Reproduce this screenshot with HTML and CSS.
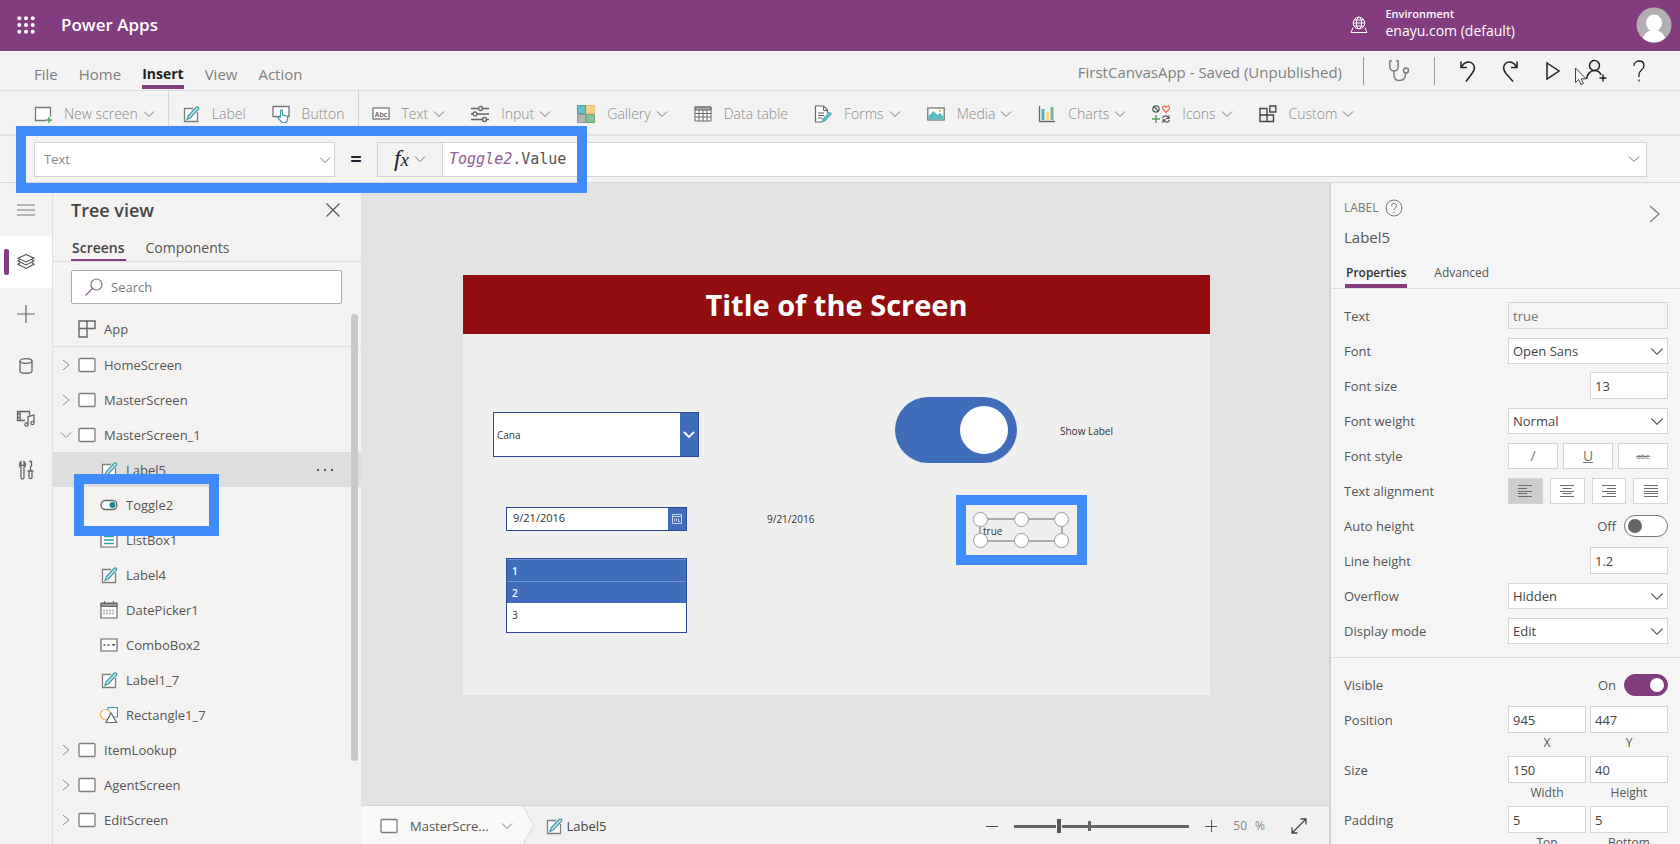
FILE: index.html
```html
<!DOCTYPE html>
<html lang="en">
<head>
    <meta charset="UTF-8">
    <meta name="viewport" content="width=device-width, initial-scale=1.0">
    <title>FirstCanvasApp - Power Apps</title>
    <link rel="stylesheet" href="styles.css">
</head>
<body>
    <!-- shared icons -->
    <svg class="sprite" aria-hidden="true">
        <symbol id="i-down" viewBox="0 0 12 8"><path d="M1 1.500l5 5 5-5" fill="none" stroke="currentColor"/></symbol>
        <symbol id="i-right" viewBox="0 0 8 12"><path d="M1 1l6 5-6 5" fill="none" stroke="currentColor"/></symbol>
        <symbol id="i-screen" viewBox="0 0 18 18"><rect x="1" y="2.500" width="16" height="13" rx="1" fill="#fff" stroke="#7d7d7d" stroke-width="1.300"/></symbol>
        <symbol id="i-label" viewBox="0 0 18 18">
            <path d="M15.500 7v9.500h-13v-13H11" fill="#fff" stroke="#7d7d7d" stroke-width="1.300"/>
            <path d="M5 14.500l1-3.500 8.200-8.700c1.500-1.300 3.400.5 2.100 2.100L8.200 13z" fill="#bfe3e6" stroke="#3d9ca5" stroke-width="1.200"/>
        </symbol>
        <symbol id="i-left" viewBox="0 0 14 12"><path d="M0 .5h14M0 3.500h9M0 6.500h14M0 8.500h9M0 11.500h14" stroke="#6c6c6c" fill="none"/></symbol>
    </svg>

    <header class="topbar">
        <button class="waffle" aria-label="App launcher">
            <svg width="18" height="18" viewBox="0 0 18 18" fill="#fff"><circle cx="2.300" cy="2.300" r="2"/><circle cx="9" cy="2.300" r="2"/><circle cx="15.700" cy="2.300" r="2"/><circle cx="2.300" cy="9" r="2"/><circle cx="9" cy="9" r="2"/><circle cx="15.700" cy="9" r="2"/><circle cx="2.300" cy="15.700" r="2"/><circle cx="9" cy="15.700" r="2"/><circle cx="15.700" cy="15.700" r="2"/></svg>
        </button>
        <a href="#" class="brand">Power Apps</a>
        <button class="environment">
            <svg width="18" height="18" viewBox="0 0 18 18" fill="none" stroke="#fff"><circle cx="9" cy="7" r="5.800"/><ellipse cx="9" cy="7" rx="2.600" ry="5.800"/><path d="M3.200 7h11.600M4 4h10M4 10h10M3 11.500L1 16.500h16l-2-5" /></svg>
            <span class="env-text"><small>Environment</small><span>enayu.com (default)</span></span>
        </button>
        <button class="avatar" aria-label="Account">
            <svg width="36" height="36" viewBox="0 0 36 36"><defs><clipPath id="round"><circle cx="18" cy="18" r="17.500"/></clipPath></defs><g clip-path="url(#round)"><rect width="36" height="36" fill="#b1afb0"/><ellipse cx="18" cy="16" rx="8" ry="8.500" fill="#fff"/><path d="M6 37c0-9 5-14 12-14s12 5 12 14z" fill="#fff"/></g></svg>
        </button>
    </header>

    <nav class="menubar">
        <a href="#">File</a>
        <a href="#">Home</a>
        <a href="#" class="active">Insert</a>
        <a href="#">View</a>
        <a href="#">Action</a>
        <span class="app-status">FirstCanvasApp - Saved (Unpublished)</span>
        <div class="app-tools">
            <button class="checker" aria-label="App checker"><svg width="22" height="24" viewBox="0 0 22 24" fill="none" stroke="#777" stroke-width="1.400"><path d="M4 2H1.800v5c0 3 1.700 5 4.200 5s4.200-2 4.200-5V2H8M6 12v3.500c0 4 2 6 5 6s6.500-1.500 6.500-6V14"/><circle cx="18" cy="11.500" r="2.500"/></svg></button>
            <button aria-label="Undo"><svg width="18" height="24" viewBox="0 0 18 24" fill="none" stroke="#222" stroke-width="1.500"><path d="M2 2.500v6h6M2.500 8C5 3 10 1.500 13.500 4.500c3 3 2.200 6.500-.5 10L7 22.500"/></svg></button>
            <button aria-label="Redo"><svg width="18" height="24" viewBox="0 0 18 24" fill="none" stroke="#222" stroke-width="1.500"><path d="M16 2.500v6h-6M15.500 8C13 3 8 1.500 4.500 4.500c-3 3-2.200 6.500.5 10l7 8"/></svg></button>
            <button aria-label="Preview the app"><svg width="18" height="24" viewBox="0 0 18 24" fill="none" stroke="#222" stroke-width="1.500"><path d="M4 4l12 8-12 8z"/></svg></button>
            <button aria-label="Share"><svg width="22" height="24" viewBox="0 0 22 24" fill="none" stroke="#222" stroke-width="1.500"><circle cx="9.500" cy="6.500" r="5"/><path d="M1.500 20c.5-5 4-8.500 8-8.500 3 0 5.500 1.800 6.500 4.500M18 15.500v7M14.500 19h7"/></svg></button>
            <button aria-label="Help"><svg width="16" height="24" viewBox="0 0 16 24" fill="none" stroke="#222" stroke-width="1.300"><path d="M3 7c0-3 2-5 5-5s5 2 5 4.800C13 11 8 11 8 15.500V18M8 20.500v2"/></svg></button>
            <svg class="cursor" width="14" height="20" viewBox="0 0 14 20"><path d="M1.500 1v14.500l3.300-3 2 5 2.500-1-2-4.700H12z" fill="#fff" stroke="#444"/></svg>
        </div>
    </nav>

    <div class="ribbon">
        <button class="tool"><svg width="18" height="18" viewBox="0 0 18 18"><path d="M12 15.500H1.500v-13h15v9" fill="#fff" stroke="#777" stroke-width="1.300"/><path d="M15 12v6M12 15h6" stroke="#4fa35a" stroke-width="1.400"/></svg><span>New screen</span><svg class="chev"><use href="#i-down"/></svg></button>
        <hr>
        <button class="tool"><svg width="18" height="18"><use href="#i-label"/></svg><span>Label</span></button>
        <button class="tool"><svg width="18" height="18" viewBox="0 0 18 18"><path d="M1 1.500h16v10H1z" fill="#fff" stroke="#777" stroke-width="1.300"/><path d="M8.500 12V6c0-1.400 2-1.400 2 0v4l4 1c1 .3 1.300 1 1.200 2l-.7 3c-.3 1-1 1.500-2 1.500h-2c-1 0-1.500-.5-2-1.200L5.700 12.500c.8-1.300 2-.8 2.800.3" fill="#fff" stroke="#3d9ca5" stroke-width="1.200"/></svg><span>Button</span></button>
        <hr>
        <button class="tool"><svg width="18" height="18" viewBox="0 0 18 18"><rect x="1" y="3" width="16" height="11" fill="#fff" stroke="#777" stroke-width="1.300"/><text x="9" y="11.500" text-anchor="middle" class="abc">Abc</text></svg><span>Text</span><svg class="chev"><use href="#i-down"/></svg></button>
        <button class="tool"><svg width="18" height="18" viewBox="0 0 18 18" fill="#f3f3f3" stroke="#666" stroke-width="1.300"><path d="M0 3.500h18M0 9h18M0 14.500h18"/><circle cx="9.500" cy="3.500" r="2"/><circle cx="4" cy="9" r="2"/><circle cx="13.500" cy="14.500" r="2"/></svg><span>Input</span><svg class="chev"><use href="#i-down"/></svg></button>
        <button class="tool"><svg width="18" height="18" viewBox="0 0 18 18"><rect x=".5" y=".5" width="8" height="8" fill="#63c1ca" stroke="#4ea3ab"/><rect x="9.500" y=".5" width="8" height="8" fill="#fbcf8c" stroke="#efc27d"/><rect x=".5" y="9.500" width="8" height="8" fill="#b4b4b4" stroke="#999"/><rect x="9.500" y="9.500" width="8" height="8" fill="#8cc095" stroke="#69a874"/></svg><span>Gallery</span><svg class="chev"><use href="#i-down"/></svg></button>
        <button class="tool"><svg width="18" height="18" viewBox="0 0 18 18"><path d="M1 2h16v14H1z" fill="#fff" stroke="#666"/><path d="M1 2h16v3H1z" fill="#aaa" stroke="#666"/><path d="M1 8.500h16M1 12h16M5 5v11M9 5v11M13 5v11" stroke="#666"/></svg><span>Data table</span></button>
        <button class="tool"><svg width="18" height="18" viewBox="0 0 18 18"><path d="M8 17H1.500V1h8l4 4v3" fill="#fff" stroke="#666" stroke-width="1.200"/><path d="M9.500 1v4.500h4M4 8h6M4 10.500h6M4 13h4" fill="none" stroke="#666"/><path d="M8 17l1-3.500L15.500 7l2 2-6.500 7z" fill="#63bcc5" stroke="#3d9ca5" stroke-width=".8"/></svg><span>Forms</span><svg class="chev"><use href="#i-down"/></svg></button>
        <button class="tool"><svg width="18" height="18" viewBox="0 0 18 18"><rect x=".8" y="3" width="16.400" height="12" fill="#fff" stroke="#777" stroke-width="1.300"/><path d="M1.500 14.500V11l5-5 4 4 2.500-2 3.500 3.500v3z" fill="#59bcc5"/><circle cx="13" cy="5.800" r="1" fill="#e9a13b"/></svg><span>Media</span><svg class="chev"><use href="#i-down"/></svg></button>
        <button class="tool"><svg width="18" height="18" viewBox="0 0 18 18"><path d="M1.500 1v15.500H17" fill="none" stroke="#666" stroke-width="1.300"/><path d="M3.500 4h3v11h-3z" fill="#4fb0ba"/><path d="M8 7h3v8H8z" fill="#fbcf8c"/><path d="M12.500 2h3v13h-3z" fill="#78b683"/></svg><span>Charts</span><svg class="chev"><use href="#i-down"/></svg></button>
        <button class="tool"><svg width="18" height="18" viewBox="0 0 18 18" fill="none" stroke="#555" stroke-width="1.200"><circle cx="4" cy="4" r="3.200"/><path d="M2 1.500l4.500 4.800"/><path d="M14 7.500L10.800 4c-1.300-3 2-3.700 3.200-1.500C15.200.3 18.500 1 17.200 4z" stroke="#e8704a"/><path d="M4 10v8M0 14h8" stroke="#4fa35a" stroke-width="1.400"/><path d="M10.500 13c.7-2.500 4.500-3 6 0M17 10.500V13.500h-3M17.500 15c-.7 2.500-4.500 3-6 0M11 18v-3.200h3"/></svg><span>Icons</span><svg class="chev"><use href="#i-down"/></svg></button>
        <button class="tool"><svg width="18" height="18" viewBox="0 0 18 18" fill="none" stroke="#444" stroke-width="1.400"><path d="M1 3.500h7v6.500H1zM1 10h7v6.500H1zM8 10h6.500v6.500H8zM10.800 1h6v6h-6z"/></svg><span>Custom</span><svg class="chev"><use href="#i-down"/></svg></button>
    </div>

    <div class="formula-bar">
        <div class="select-wrap property">
            <select aria-label="Property"><option>Text</option></select>
            <svg class="chev"><use href="#i-down"/></svg>
        </div>
        <span class="equals">=</span>
        <button class="fx" aria-label="Insert function"><i>f<small>x</small></i><svg class="chev"><use href="#i-down"/></svg></button>
        <div class="formula" role="textbox" aria-label="Formula" contenteditable="true"><em>Toggle2</em>.Value</div>
        <button class="expand" aria-label="Expand formula bar"><svg class="chev"><use href="#i-down"/></svg></button>
        <div class="highlight highlight-formula"></div>
    </div>

    <main class="workspace">
        <nav class="rail">
            <button aria-label="Menu"><svg width="18" height="18" viewBox="0 0 18 18" stroke="#777" stroke-width="1.200"><path d="M0 4h18M0 9h18M0 14h18"/></svg></button>
            <button class="active" aria-label="Tree view"><svg width="18" height="18" viewBox="0 0 18 18" fill="none" stroke="#555" stroke-width="1.100"><path d="M9 1.500l8 3.700L9 9 1 5.200zM3 6.500L1 8l8 4 8-4-2-1.500M3 9.800l-2 1.500 8 4.200 8-4.200-2-1.500"/></svg></button>
            <button aria-label="Insert"><svg width="18" height="18" viewBox="0 0 18 18" stroke="#666" stroke-width="1.200"><path d="M9 0v18M0 9h18"/></svg></button>
            <button aria-label="Data"><svg width="18" height="18" viewBox="0 0 18 18" fill="none" stroke="#666" stroke-width="1.300"><ellipse cx="9" cy="4" rx="6" ry="2.300"/><path d="M3 4v10c0 3 12 3 12 0V4"/></svg></button>
            <button aria-label="Media"><svg width="20" height="18" viewBox="0 0 20 18" fill="none" stroke="#666" stroke-width="1.300"><path d="M9 11.500H1.500v-9h12V6M4 2.500v9M1.500 5H4M1.500 8.500H4M12 15.500V7.500l6-1.500v7"/><circle cx="10.500" cy="15.500" r="1.600"/><circle cx="16.500" cy="14" r="1.600"/></svg></button>
            <button aria-label="Advanced tools"><svg width="18" height="20" viewBox="0 0 18 20" fill="none" stroke="#666" stroke-width="1.300"><path d="M4 1.500v4h3v-4c2 1.500 2 5 0 6v10c0 2-3 2-3 0v-10c-2-1-2-4.500 0-6zM12 1.500h2.500v4L13.500 7v4M10.500 11h6M12 11v6.500c0 1.500 3 1.500 3 0V11"/></svg></button>
        </nav>

        <aside class="tree">
            <div class="tree-head">
                <h2>Tree view</h2>
                <button aria-label="Close"><svg width="14" height="14" viewBox="0 0 14 14" stroke="#555" stroke-width="1.200"><path d="M.5.5l13 13M13.500.5l-13 13"/></svg></button>
            </div>
            <div class="tree-tabs">
                <button class="active">Screens</button>
                <button>Components</button>
            </div>
            <label class="search">
                <svg width="18" height="18" viewBox="0 0 18 18" fill="none" stroke="#8f6390" stroke-width="1.200"><circle cx="11.500" cy="6.500" r="5.500"/><path d="M7.500 10.500l-7 7"/></svg>
                <input type="text" placeholder="Search" aria-label="Search">
            </label>
            <div class="tree-body">
                <div class="app-row"><svg width="18" height="18" viewBox="0 0 18 18" fill="none" stroke="#666" stroke-width="1.400"><path d="M1 1h16v7.500H1zM1 8.500h8V17H1zM9 1v7.500"/></svg>App</div>
                <ul>
                    <li><svg class="arrow"><use href="#i-right"/></svg><svg class="icon"><use href="#i-screen"/></svg>HomeScreen</li>
                    <li><svg class="arrow"><use href="#i-right"/></svg><svg class="icon"><use href="#i-screen"/></svg>MasterScreen</li>
                    <li><svg class="arrow"><use href="#i-down"/></svg><svg class="icon"><use href="#i-screen"/></svg>MasterScreen_1</li>
                    <li class="child selected"><svg class="icon"><use href="#i-label"/></svg>Label5<button aria-label="More"><svg width="18" height="4" viewBox="0 0 18 4" fill="#555"><circle cx="2" cy="2" r="1.200"/><circle cx="9" cy="2" r="1.200"/><circle cx="16" cy="2" r="1.200"/></svg></button></li>
                    <li class="child"><svg class="icon" viewBox="0 0 18 18"><rect x="1" y="4.500" width="16" height="9" rx="4.500" fill="#fff" stroke="#666" stroke-width="1.300"/><circle cx="12.500" cy="9" r="3" fill="#16868e"/></svg>Toggle2<div class="highlight highlight-node"></div></li>
                    <li class="child"><svg class="icon" viewBox="0 0 18 18"><path d="M1 2h16v14H1z" fill="#fff" stroke="#666" stroke-width="1.200"/><path d="M4 5.500h10M4 9h10M4 12.500h10" stroke="#3d9ca5" stroke-width="1.300"/></svg>ListBox1</li>
                    <li class="child"><svg class="icon"><use href="#i-label"/></svg>Label4</li>
                    <li class="child"><svg class="icon" viewBox="0 0 18 18"><path d="M1 2h16v15H1z" fill="#fff" stroke="#666" stroke-width="1.200"/><path d="M1 2.500h16v3H1z" fill="#999" stroke="#666"/><path d="M4.500 0v3M13.500 0v3" stroke="#666"/><path d="M4 8.500v6M7 8.500v6M10 8.500v6M13 8.500v6" stroke="#777" stroke-dasharray="2 1"/></svg>DatePicker1</li>
                    <li class="child"><svg class="icon" viewBox="0 0 18 18"><path d="M1 3h16v12H1z" fill="#fff" stroke="#666" stroke-width="1.200"/><path d="M3.500 9h2M7.500 9h2" stroke="#555" stroke-width="1.400"/><path d="M11.500 8h4L13.500 10.500z" fill="#555"/></svg>ComboBox2</li>
                    <li class="child"><svg class="icon"><use href="#i-label"/></svg>Label1_7</li>
                    <li class="child"><svg class="icon" viewBox="0 0 18 18"><path d="M8 1.500h9.500V11H8z" fill="#fff" stroke="#3d9ca5" stroke-width="1.200"/><circle cx="5.500" cy="8.500" r="5" fill="#fff" stroke="#f0b566" stroke-width="1.200"/><path d="M11 7l5.500 9.500H6z" fill="#fff" stroke="#666" stroke-width="1.200"/></svg>Rectangle1_7</li>
                    <li><svg class="arrow"><use href="#i-right"/></svg><svg class="icon"><use href="#i-screen"/></svg>ItemLookup</li>
                    <li><svg class="arrow"><use href="#i-right"/></svg><svg class="icon"><use href="#i-screen"/></svg>AgentScreen</li>
                    <li><svg class="arrow"><use href="#i-right"/></svg><svg class="icon"><use href="#i-screen"/></svg>EditScreen</li>
                </ul>
                <div class="scrollbar"></div>
            </div>
        </aside>

        <section class="stage">
            <div class="canvas">
                <div class="screen">
                    <h1>Title of the Screen</h1>
                    <div class="combo">
                        <input type="text" value="Cana" aria-label="Combo box">
                        <button aria-label="Open list"><svg width="12" height="8" viewBox="0 0 12 8" fill="none" stroke="#fff" stroke-width="1.800"><path d="M1 1l5 5 5-5"/></svg></button>
                    </div>
                    <div class="date">
                        <input type="text" value="9/21/2016" aria-label="Date">
                        <button aria-label="Open calendar"><svg width="10" height="10" viewBox="0 0 10 10" fill="none" stroke="#c5d4f0"><path d="M.5.5h9v9h-9zM.5 2.500h9M2.500 4.500v3M4.500 4.500v3M6.500 4.500v3h1.500"/></svg></button>
                    </div>
                    <span class="date-label">9/21/2016</span>
                    <select class="listbox" multiple size="3" aria-label="List box">
                        <option selected>1</option>
                        <option selected>2</option>
                        <option>3</option>
                    </select>
                    <input type="checkbox" class="big-toggle" id="toggle2" checked>
                    <label class="toggle-label" for="toggle2">Show Label</label>
                    <div class="selection">
                        true
                        <i class="h nw"></i><i class="h n"></i><i class="h ne"></i>
                        <i class="h sw"></i><i class="h s"></i><i class="h se"></i>
                        <div class="highlight highlight-label"></div>
                    </div>
                </div>
            </div>
            <footer class="statusbar">
                <button class="crumb"><svg class="icon"><use href="#i-screen"/></svg><span>MasterScre...</span><svg class="chev"><use href="#i-down"/></svg></button>
                <svg class="crumb-end" width="12" viewBox="0 0 12 39" preserveAspectRatio="none"><path d="M0 0l11 20L0 39z" fill="#f8f8f6"/><path d="M0 0l11 20L0 39" fill="none" stroke="#d8d8d8"/></svg>
                <button class="crumb-current"><svg class="icon"><use href="#i-label"/></svg>Label5</button>
                <div class="zoom">
                    <button aria-label="Zoom out"><svg width="12" height="12" stroke="#555"><path d="M0 6.500h12"/></svg></button>
                    <input type="range" min="0" max="100" value="25" aria-label="Zoom">
                    <button aria-label="Zoom in"><svg width="12" height="12" stroke="#555"><path d="M0 6.500h12M6.500 0v12"/></svg></button>
                    <span class="percent"><span>50</span><span>%</span></span>
                    <button aria-label="Fit to window"><svg width="16" height="16" viewBox="0 0 16 16" fill="none" stroke="#444" stroke-width="1.300"><path d="M1 15L15 1M9.500 1H15v5.500M1 9.500V15h5.500"/></svg></button>
                </div>
            </footer>
        </section>

        <aside class="props">
            <div class="props-head">
                <div>
                    <div class="kind">LABEL <svg width="18" height="18" viewBox="0 0 18 18" fill="none" stroke="#777"><circle cx="9" cy="9" r="8"/><path d="M6.500 7c0-3.500 5-3.300 5-.3C11.500 9 9 8.800 9 11M9 12.500V14"/></svg></div>
                    <div class="name">Label5</div>
                </div>
                <button aria-label="Collapse panel"><svg width="12" height="18" viewBox="0 0 12 18" fill="none" stroke="#777" stroke-width="1.200"><path d="M1 1l9 8-9 8"/></svg></button>
            </div>
            <div class="props-tabs">
                <button class="active">Properties</button>
                <button>Advanced</button>
            </div>
            <div class="props-group">
                <div class="row"><label for="p-text">Text</label><input id="p-text" class="wide" type="text" value="true" readonly></div>
                <div class="row"><label for="p-font">Font</label><div class="select-wrap"><select id="p-font"><option>Open Sans</option></select><svg class="chev"><use href="#i-down"/></svg></div></div>
                <div class="row"><label for="p-size">Font size</label><input id="p-size" type="text" value="13"></div>
                <div class="row"><label for="p-weight">Font weight</label><div class="select-wrap"><select id="p-weight"><option>Normal</option></select><svg class="chev"><use href="#i-down"/></svg></div></div>
                <div class="row"><span>Font style</span><div class="buttons style-buttons"><button aria-label="Italic">/</button><button aria-label="Underline"><u>U</u></button><button aria-label="Strikethrough"><s>abc</s></button></div></div>
                <div class="row"><span>Text alignment</span><div class="buttons align-buttons">
                    <button class="on" aria-label="Left"><svg width="14" height="12"><use href="#i-left"/></svg></button>
                    <button aria-label="Center"><svg width="14" height="12" stroke="#6c6c6c"><path d="M0 .5h14M2.500 3.500h9M0 6.500h14M2.500 8.500h9M0 11.500h14"/></svg></button>
                    <button aria-label="Right"><svg width="14" height="12" stroke="#6c6c6c"><path d="M0 .5h14M5 3.500h9M0 6.500h14M5 8.500h9M0 11.500h14"/></svg></button>
                    <button aria-label="Justify"><svg width="14" height="12" stroke="#6c6c6c"><path d="M0 .5h14M0 3.500h14M0 6.500h14M0 8.500h14M0 11.500h14"/></svg></button>
                </div></div>
                <div class="row"><label for="p-auto">Auto height</label><div class="switch"><span>Off</span><input id="p-auto" type="checkbox"></div></div>
                <div class="row"><label for="p-line">Line height</label><input id="p-line" type="text" value="1.2"></div>
                <div class="row"><label for="p-over">Overflow</label><div class="select-wrap"><select id="p-over"><option>Hidden</option></select><svg class="chev"><use href="#i-down"/></svg></div></div>
                <div class="row"><label for="p-mode">Display mode</label><div class="select-wrap"><select id="p-mode"><option>Edit</option></select><svg class="chev"><use href="#i-down"/></svg></div></div>
            </div>
            <div class="props-group">
                <div class="row"><label for="p-vis">Visible</label><div class="switch"><span>On</span><input id="p-vis" type="checkbox" checked></div></div>
                <div class="row pair"><span>Position</span><label><input type="text" value="945">X</label><label><input type="text" value="447">Y</label></div>
                <div class="row pair"><span>Size</span><label><input type="text" value="150">Width</label><label><input type="text" value="40">Height</label></div>
                <div class="row pair"><span>Padding</span><label><input type="text" value="5">Top</label><label><input type="text" value="5">Bottom</label></div>
            </div>
        </aside>
    </main>
</body>
</html>
```

FILE: styles.css
```css
* {
    box-sizing: border-box;
}

body {
    margin: 0;
    height: 100vh;
    display: flex;
    flex-direction: column;
    overflow: hidden;
    background: #f3f3f3;
    color: #555;
    font-family: "Open Sans", "Noto Sans", sans-serif;
    font-size: 13px;
    line-height: 18px;
}

button, input, select {
    font: inherit;
    color: inherit;
    margin: 0;
}

button {
    border: 0;
    padding: 0;
    background: none;
    cursor: pointer;
}

button svg {
    display: block;
}

a {
    color: inherit;
    text-decoration: none;
}

svg {
    flex: none;
}

.sprite {
    display: none;
}

.chev {
    width: 12px;
    height: 8px;
    color: #777;
}

.icon {
    width: 18px;
    height: 18px;
}

.highlight {
    position: absolute;
    z-index: 5;
    border: 10px solid #3f8cfa;
    pointer-events: none;
}

/* top bar */
.topbar {
    flex: none;
    height: 51px;
    display: flex;
    align-items: center;
    padding: 0 8px 2px 17px;
    background: #833c80;
    color: #fff;
}

.brand {
    margin-left: 26px;
    font-size: 17px;
    font-weight: 600;
}

.environment {
    display: flex;
    align-items: center;
    gap: 17px;
    margin-left: auto;
    text-align: left;
}

.env-text {
    display: flex;
    flex-direction: column;
    padding-bottom: 4px;
    font-size: 14px;
}

.env-text small {
    font-size: 11px;
    font-weight: 600;
    line-height: 16px;
}

.avatar {
    margin-left: 121px;
}

/* menu */
.menubar {
    flex: none;
    height: 40px;
    display: flex;
    align-items: center;
    gap: 21px;
    padding: 0 33px 0 34px;
    border-bottom: 1px solid #ddd;
    color: #808080;
    font-size: 15px;
}

.menubar a {
    padding: 5px 0 2px;
    border-bottom: 4px solid transparent;
    margin-top: 8px;
}

.menubar .active {
    border-color: #833c80;
    color: #222;
    font-size: 14px;
    font-weight: 700;
}

.app-status {
    margin-left: auto;
    padding-top: 3px;
}

.app-tools {
    position: relative;
    display: flex;
    align-items: center;
    gap: 24px;
}

.checker {
    padding: 2px 24px;
    border: solid #999;
    border-width: 0 1px;
}

.cursor {
    position: absolute;
    right: 59px;
    top: 10px;
}

/* ribbon */
.ribbon {
    flex: none;
    height: 45px;
    display: flex;
    align-items: center;
    gap: 26px;
    padding: 2px 34px 0;
    border-bottom: 2px solid #e4e4e4;
    color: #8a8a8a;
}

.ribbon hr {
    align-self: stretch;
    width: 1px;
    margin: -2px -13px 0;
    border: 0;
    background: #d4d4d4;
}

.tool {
    display: flex;
    align-items: center;
    gap: 5px;
    font-size: 14px;
    font-weight: 300;
}

.tool svg:first-child {
    margin-right: 7px;
}

.abc {
    font-size: 7px;
    font-weight: 600;
    fill: #555;
}

/* formula bar */
.formula-bar {
    flex: none;
    position: relative;
    height: 47px;
    display: flex;
    align-items: center;
    padding: 0 33px 0 34px;
    border-bottom: 1px solid #d8d8d8;
    font-size: 13px;
}

.select-wrap {
    position: relative;
    width: 160px;
}

.select-wrap select {
    appearance: none;
    width: 100%;
    height: 26px;
    padding: 0 4px;
    border: 1px solid #d4d4d4;
    border-radius: 0;
    background: #fff;
    color: #444;
}

.select-wrap .chev {
    position: absolute;
    right: 4px;
    top: 9px;
    pointer-events: none;
}

.select-wrap.property {
    width: 301px;
}

.property select {
    height: 35px;
    padding: 0 9px;
    color: #888;
}

.property .chev {
    top: 14px;
}

.equals {
    width: 42px;
    text-align: center;
    font-size: 20px;
    font-weight: 700;
    color: #222;
}

.fx {
    width: 66px;
    height: 35px;
    display: flex;
    align-items: center;
    justify-content: center;
    gap: 5px;
    border: 1px solid #d4d4d4;
    font-family: "Liberation Serif", serif;
    font-size: 24px;
    color: #222;
}

.fx small {
    font-size: 19px;
}

.formula {
    flex: 1;
    height: 35px;
    padding: 0 6px;
    border: solid #d4d4d4;
    border-width: 1px 0;
    background: #fff;
    font-family: "DejaVu Sans Mono", monospace;
    font-size: 15px;
    line-height: 32px;
}

.formula em {
    color: #8f5d90;
}

.expand {
    height: 35px;
    padding: 0 6px;
    border: solid #d4d4d4;
    border-width: 1px 1px 1px 0;
    background: #fff;
}

.highlight-formula {
    left: 16px;
    top: -10px;
    width: 571px;
    height: 67px;
}

/* workspace */
.workspace {
    flex: 1;
    min-height: 0;
    display: flex;
}

.rail {
    flex: none;
    width: 53px;
    display: flex;
    flex-direction: column;
    padding-top: 1px;
    border-right: 1px solid #e2e2e2;
    background: #f4f3f2;
}

.rail button {
    position: relative;
    height: 52px;
    display: flex;
    align-items: center;
    justify-content: center;
}

.rail .active {
    background: #fff;
}

.rail .active::before {
    content: "";
    position: absolute;
    left: 4px;
    top: 13px;
    width: 5px;
    height: 26px;
    border-radius: 2px;
    background: #833c80;
}

/* tree view */
.tree {
    flex: none;
    width: 308px;
    display: flex;
    flex-direction: column;
    background: #f4f3f2;
}

.tree-head {
    display: flex;
    align-items: center;
    justify-content: space-between;
    height: 53px;
    padding: 0 21px 0 18px;
}

.tree-head h2 {
    margin: 0;
    font-size: 18px;
    font-weight: 600;
    color: #444;
}

.tree-tabs {
    display: flex;
    gap: 19px;
    height: 26px;
    padding: 0 18px;
    border-bottom: 1px solid #ddd;
    font-size: 14px;
}

.tree-tabs button {
    padding: 0 1px;
    border-bottom: 2px solid transparent;
}

.tree-tabs .active {
    border-color: #833c80;
    color: #444;
    font-weight: 600;
}

.search {
    display: flex;
    align-items: center;
    gap: 8px;
    height: 34px;
    margin: 8px 19px 8px 18px;
    padding: 0 13px;
    border: 1px solid #aaa;
    border-radius: 2px;
    background: #fff;
}

.search input {
    flex: 1;
    min-width: 0;
    padding: 0;
    border: 0;
    outline: 0;
    background: none;
}

.search input::placeholder {
    color: #777;
}

.tree-body {
    position: relative;
    flex: 1;
    min-height: 0;
}

.app-row {
    display: flex;
    align-items: center;
    gap: 8px;
    height: 35px;
    padding-left: 25px;
    border-bottom: 1px solid #ddd;
}

.tree ul {
    list-style: none;
    margin: 0;
    padding: 0;
}

.tree li {
    position: relative;
    display: flex;
    align-items: center;
    gap: 8px;
    height: 35px;
    padding: 0 27px 0 7px;
}

.tree .arrow {
    width: 12px;
    height: 12px;
    margin-right: -2px;
    color: #888;
}

.tree .child {
    padding-left: 47px;
}

.tree .selected {
    background: #dedede;
}

.selected button {
    margin-left: auto;
}

.highlight-node {
    left: 21px;
    top: -13px;
    width: 145px;
    height: 62px;
}

.scrollbar {
    position: absolute;
    right: 3px;
    top: 2px;
    width: 7px;
    height: 84%;
    border-radius: 4px;
    background: #c8c8c8;
}

/* canvas */
.stage {
    flex: 1;
    min-width: 0;
    display: flex;
    flex-direction: column;
}

.canvas {
    flex: 1;
    min-height: 0;
    padding: 92px 119px 0 102px;
    background: #e3e3e3;
}

.screen {
    position: relative;
    aspect-ratio: 16 / 9;
    background: #efefef;
    color: #333;
    font-size: 10px;
    line-height: 14px;
}

.screen h1 {
    margin: 0;
    height: 59px;
    background: #920d0e;
    color: #fff;
    font-size: 29px;
    line-height: 60px;
    text-align: center;
}

/* controls dropped on the screen */
.combo, .date {
    position: absolute;
    display: flex;
    border: 1px solid #2c4a94;
    background: #fff;
}

.combo {
    left: 30px;
    top: 137px;
    width: 206px;
    height: 45px;
}

.date {
    left: 43px;
    top: 232px;
    width: 181px;
    height: 24px;
    font-size: 11px;
}

.combo input, .date input {
    flex: 1;
    min-width: 0;
    padding: 0 3px;
    border: 0;
    background: none;
}

.date input {
    padding: 0 6px 2px;
}

.combo button, .date button {
    width: 18px;
    display: flex;
    align-items: center;
    justify-content: center;
    background: #3f6dba;
}

.date-label {
    position: absolute;
    left: 304px;
    top: 237px;
}

.listbox {
    position: absolute;
    left: 43px;
    top: 283px;
    width: 181px;
    height: 75px;
    padding: 0;
    border: 1px solid #2c4a94;
    border-radius: 0;
    background: #fff;
    overflow: hidden;
    scrollbar-width: none;
}

.listbox option {
    min-height: 22px;
    padding: 4px 5px 3px;
    border-top: 1px solid #6f94d6;
    line-height: 14px;
}

.listbox option:checked {
    background: #3f6dba linear-gradient(#3f6dba, #3f6dba);
    -webkit-text-fill-color: #fff;
    font-weight: 600;
}

.listbox option:last-child {
    border-color: #fff;
}

.big-toggle {
    appearance: none;
    position: absolute;
    left: 432px;
    top: 122px;
    width: 122px;
    height: 66px;
    padding: 9px;
    border-radius: 33px;
    background: #3f6dba;
    display: flex;
    justify-content: flex-end;
}

.big-toggle::before {
    content: "";
    width: 48px;
    height: 48px;
    border-radius: 50%;
    background: #fff;
}

.toggle-label {
    position: absolute;
    left: 597px;
    top: 149px;
}

.selection {
    position: absolute;
    left: 516px;
    top: 243px;
    width: 84px;
    height: 24px;
    padding: 4px 2px;
    border: 2px solid #aaa;
}

.h {
    position: absolute;
    width: 15px;
    height: 15px;
    border: 1px solid #999;
    border-radius: 50%;
    background: #fff;
}

.nw, .n, .ne {
    top: -8px;
}

.sw, .s, .se {
    bottom: -8px;
}

.nw, .sw {
    left: -8px;
}

.n, .s {
    left: 33px;
}

.ne, .se {
    right: -8px;
}

.highlight-label {
    left: -25px;
    top: -25px;
    width: 131px;
    height: 70px;
}

/* status bar */
.statusbar {
    flex: none;
    height: 39px;
    display: flex;
    align-items: center;
    border-top: 1px solid #d6d6d6;
    background: #f1f1f1;
}

.crumb {
    align-self: stretch;
    display: flex;
    align-items: center;
    gap: 12px;
    padding: 2px 10px 0 19px;
    background: #f8f8f6;
}

.crumb-end {
    align-self: stretch;
    height: 100%;
}

.crumb-current {
    display: flex;
    align-items: center;
    gap: 4px;
    padding: 2px 0 0 10px;
    color: #444;
}

.zoom {
    display: flex;
    align-items: center;
    gap: 16px;
    margin-left: auto;
    padding: 2px 22px 0 0;
    font-size: 12px;
    color: #888;
}

.zoom input {
    appearance: none;
    width: 175px;
    height: 16px;
    background:
        linear-gradient(#666, #666) 43% 50% / 3px 10px no-repeat,
        linear-gradient(#666, #666) 0 50% / 100% 3px no-repeat;
}

.zoom input::-webkit-slider-thumb {
    appearance: none;
    width: 4px;
    height: 14px;
    background: #555;
    box-shadow: 0 0 0 1px #f1f1f1;
}

.percent {
    display: flex;
    gap: 8px;
    margin-right: 10px;
}

/* properties */
.props {
    flex: none;
    width: 351px;
    border-left: 2px solid #d4d4d4;
    background: #f5f5f5;
    overflow: hidden;
}

.props-head {
    display: flex;
    justify-content: space-between;
    align-items: flex-start;
    padding: 16px 19px 0 13px;
}

.props-head button {
    margin-top: 6px;
}

.kind {
    display: flex;
    align-items: center;
    gap: 6px;
    color: #777;
    font-size: 12px;
}

.name {
    padding-top: 10px;
    font-size: 15px;
    line-height: 20px;
}

.props-tabs {
    display: flex;
    gap: 26px;
    height: 42px;
    padding: 14px 14px 0;
    border-bottom: 1px solid #ddd;
    font-size: 12px;
}

.props-tabs button {
    padding: 0 1px;
    border-bottom: 4px solid transparent;
}

.props-tabs .active {
    border-color: #833c80;
    color: #333;
    font-weight: 600;
}

.props-group {
    padding: 9px 12px 9px 13px;
    border-bottom: 1px solid #ddd;
}

.row {
    display: flex;
    align-items: center;
    justify-content: space-between;
    height: 35px;
}

.row input[type="text"] {
    width: 78px;
    height: 27px;
    padding: 0 4px;
    border: 1px solid #d4d4d4;
    background: #fff;
    color: #444;
}

.row input.wide {
    width: 160px;
    background: #f5f5f5;
    color: #777;
}

.row .chev {
    width: 14px;
    height: 9px;
    color: #444;
}

.buttons {
    display: flex;
    width: 160px;
    gap: 5px;
}

.buttons button {
    flex: 1;
    height: 26px;
    display: flex;
    align-items: center;
    justify-content: center;
    border: 1px solid #d4d4d4;
    background: #fff;
    color: #777;
    font-size: 14px;
}

.buttons s {
    font-size: 8px;
}

.align-buttons {
    gap: 7px;
}

.buttons .on {
    background: #cdcdcd;
}

.switch {
    display: flex;
    align-items: center;
    gap: 8px;
}

.switch input {
    appearance: none;
    width: 44px;
    height: 22px;
    padding: 3px;
    border: 1px solid #777;
    border-radius: 11px;
    background: #fff;
    display: flex;
}

.switch input::before {
    content: "";
    width: 14px;
    height: 14px;
    border-radius: 50%;
    background: #666;
}

.switch input:checked {
    justify-content: flex-end;
    border-color: #833c80;
    background: #833c80;
}

.switch input:checked::before {
    background: #fff;
}

.row.pair {
    align-items: flex-start;
    gap: 4px;
    height: 50px;
    padding-top: 4px;
}

.pair > span {
    flex: 1;
    line-height: 28px;
}

.pair label {
    width: 78px;
    text-align: center;
    font-size: 12px;
    line-height: 19px;
}

.pair input {
    display: block;
    font-size: 13px;
}
```
